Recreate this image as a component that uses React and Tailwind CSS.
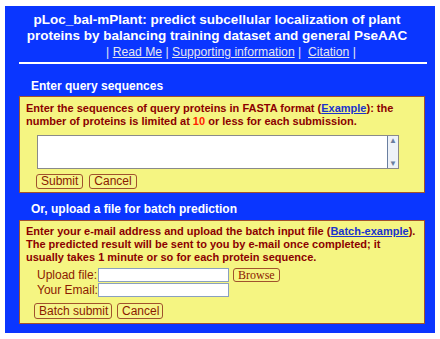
import React from "react";

const btn =
  "h-[15px] px-[4px] bg-[#f5f58a] border border-[#a0522d] rounded-[3px] text-[#8b1a00] text-[12px] leading-[13px] whitespace-nowrap font-['Liberation_Sans',Arial,sans-serif]";

export default function App() {
  return (
    <div className="min-h-screen bg-white pt-[6px] pl-[5px] font-['Liberation_Sans',Arial,sans-serif]">
      <div className="w-[430px] h-[327px] bg-[#0a36ff] flex flex-col">
        <div className="pt-[6px] pr-[6px] text-center text-white font-bold text-[13.5px] leading-[16px]">
          <div>pLoc_bal-mPlant: predict subcellular localization of plant</div>
          <div>proteins by balancing training dataset and general PseAAC</div>
        </div>
        <div className="pl-[22px] text-center text-[#e6e6f0] text-[12.2px] leading-[16px] whitespace-pre">
          | <a className="underline">Read Me</a> | <a className="underline">Supporting information</a> |{"  "}
          <a className="underline">Citation</a> |
        </div>
        <div className="mt-[2px] ml-[14px] w-[408px] h-[2px] bg-white" />

        <div className="mt-[14px] ml-[26px] text-white font-bold text-[12px] leading-[16px]">
          Enter query sequences
        </div>
        <div className="mt-[2px] ml-[14px] w-[406px] h-[97px] bg-[#f5f582] border border-[#a0522d] px-[6px] pt-[5px]">
          <p className="text-[#8b0000] font-bold text-[11px] leading-[13px]">
            Enter the sequences of query proteins in FASTA format (
            <a className="text-[#1a33cc] underline">Example</a>): the number of proteins is limited at{" "}
            <span className="text-[#ff2200]">10</span> or less for each submission.
          </p>
          <div className="mt-[7px] ml-[11px] w-[362px] h-[34px] bg-white border border-[#8a8a8a] flex justify-end">
            <div className="w-[11px] h-full border-l border-[#6a7fa0] bg-[#eef2f8] flex flex-col justify-between items-center text-[8px] leading-[9px] text-[#6a7fa0]">
              <span>▲</span>
              <span>▼</span>
            </div>
          </div>
          <div className="mt-[5px] ml-[10px] flex gap-[6px]">
            <button className={btn}>Submit</button>
            <button className={btn}>Cancel</button>
          </div>
        </div>

        <div className="mt-[8px] ml-[26px] text-white font-bold text-[12px] leading-[16px]">
          Or, upload a file for batch prediction
        </div>
        <div className="mt-[3px] ml-[14px] w-[406px] h-[104px] bg-[#f5f582] border border-[#a0522d] px-[6px] pt-[4px]">
          <p className="text-[#8b0000] font-bold text-[11px] leading-[13px]">
            Enter your e-mail address and upload the batch input file (
            <a className="text-[#1a33cc] underline">Batch-example</a>). The predicted result will be sent to you by
            e-mail once completed; it usually takes 1 minute or so for each protein sequence.
          </p>
          <div className="mt-[4px] ml-[11px] flex flex-col gap-[1px] text-[#8b1a00] text-[12px] leading-[14px]">
            <div className="flex items-center">
              <span className="w-[60px] text-right whitespace-nowrap">Upload file:</span>
              <span className="ml-[1px] w-[131px] h-[14px] bg-white border border-[#8aa0c0]" />
              <button className="ml-[4px] h-[14px] px-[4px] border border-[#a0522d] rounded-[3px] text-[#8b1a00] text-[12px] leading-[12px] font-['Liberation_Serif','Times_New_Roman',serif]">
                Browse
              </button>
            </div>
            <div className="flex items-center">
              <span className="w-[60px] text-right whitespace-nowrap">Your Email:</span>
              <span className="ml-[1px] w-[131px] h-[14px] bg-white border border-[#8aa0c0]" />
            </div>
          </div>
          <div className="mt-[6px] ml-[8px] flex gap-[5px]">
            <button className={btn + " h-[16px] w-[78px]"}>Batch submit</button>
            <button className={btn + " h-[16px] w-[46px]"}>Cancel</button>
          </div>
        </div>
      </div>
    </div>
  );
}
